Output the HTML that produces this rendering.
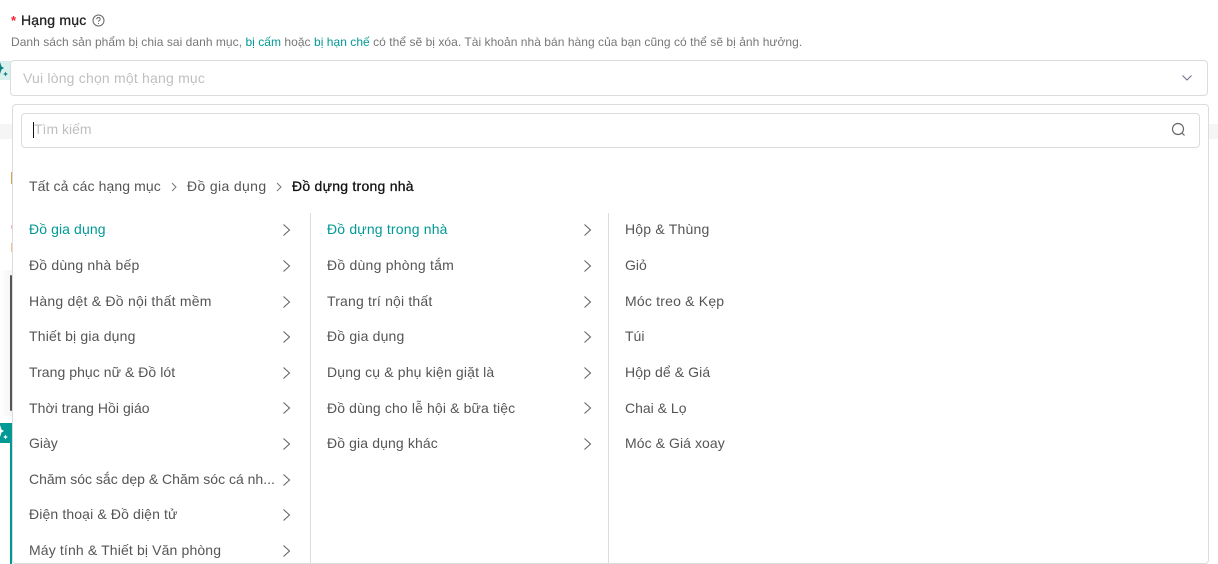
<!DOCTYPE html>
<html lang="vi"><head><meta charset="utf-8"><style>
html,body{margin:0;padding:0;background:#fff}
body{width:1218px;height:564px;position:relative;overflow:hidden;font-family:"Liberation Sans","Noto Sans CJK JP",sans-serif;font-size:14px;color:#555}
.t{position:absolute;white-space:nowrap;line-height:20px}
.b{position:absolute;box-sizing:border-box;background:#fff;border:1px solid #dcdcdc;border-radius:4px}
.r{position:absolute}
svg{position:absolute;fill:none}
.g{color:#009995}
</style></head><body>
<div class="r" style="left:0;top:124px;width:1218px;height:15px;background:#f5f5f5"></div>
<div class="r" style="left:0;top:61px;width:12px;height:19px;background:#d9f0ee"></div>
<div class="r" style="left:0;top:270px;width:12px;height:146px;background:linear-gradient(90deg,#fff 0,#f4f4f4 100%)"></div>
<div class="r" style="left:10px;top:275px;width:2px;height:136px;background:#555;border-radius:2px"></div>
<div class="r" style="left:11px;top:172px;width:1px;height:12px;background:#d9a25c"></div>
<div class="r" style="left:11px;top:225px;width:1px;height:4px;background:#f3b9bd"></div>
<div class="r" style="left:11px;top:243px;width:1px;height:9px;background:#ecc48f"></div>
<div class="r" style="left:0;top:423px;width:12px;height:20px;background:#009995"></div>
<div class="r" style="left:10px;top:443px;width:2px;height:121px;background:#009995"></div>
<svg style="left:0;top:60px" width="10" height="20" viewBox="0 0 10 20"><path d="M0 2L1.500 6.500 4 8 1.500 9.500 0 14Z" fill="#0a7f80"/><path d="M5.500 11.500L6.200 13.300 8 14 6.200 14.700 5.500 16.500 4.800 14.700 3 14 4.800 13.300Z" fill="#0a7f80"/></svg>
<svg style="left:0;top:423px" width="10" height="20" viewBox="0 0 10 20"><path d="M0 2L1.500 6.500 4 8 1.500 9.500 0 14Z" fill="#fff"/><path d="M5.500 11.500L6.200 13.300 8 14 6.200 14.700 5.500 16.500 4.800 14.700 3 14 4.800 13.300Z" fill="#fff"/></svg>

<div class="t" style="left:11px;top:11px;color:#f5222d;font-size:13px;font-weight:700">*</div>
<div class="t" style="left:21px;top:10px;color:#222;letter-spacing:.2px;-webkit-text-stroke:.3px #222">Hạng mục</div>
<svg style="left:92px;top:14px" width="13" height="13" viewBox="0 0 13 13"><circle cx="6.500" cy="6.500" r="5.500" stroke="#666"/><path d="M4.800 5.200C4.800 3 8.200 3 8.200 5.200 8.200 6.500 6.500 6.300 6.500 7.700" stroke="#666"/><path d="M6.500 9v1" stroke="#666"/></svg>
<div class="t" style="left:11px;top:32px;font-size:12px;color:#777;letter-spacing:.04px">Danh sách sản phẩm bị chia sai danh mục, <span class="g">bị cấm</span> hoặc <span class="g">bị hạn chế</span> có thể sẽ bị xóa. Tài khoản nhà bán hàng của bạn cũng có thể sẽ bị ảnh hưởng.</div>

<div class="b" style="left:10px;top:60px;width:1198px;height:36px"></div>
<div class="t" style="left:23px;top:68px;color:#bfbfbf;letter-spacing:.2px">Vui lòng chọn một hạng mục</div>
<svg style="left:1181px;top:74px" width="12" height="8" viewBox="0 0 12 8"><path d="M1.500 1.500L6 6 10.500 1.500" stroke="#6f7190" stroke-width="1.100"/></svg>

<div class="b" style="left:12px;top:104px;width:1197px;height:460px"></div>
<div class="b" style="left:21px;top:113px;width:1179px;height:35px"></div>
<div class="r" style="left:33px;top:122px;width:1px;height:16px;background:#111"></div>
<div class="t" style="left:34px;top:119px;color:#bfbfbf">Tìm kiếm</div>
<svg style="left:1171px;top:122px" width="15" height="15" viewBox="0 0 15 15"><circle cx="7" cy="7" r="5.500" stroke="#666" stroke-width="1.200"/><path d="M11 11L13.500 13.500" stroke="#666" stroke-width="1.200"/></svg>

<div class="t" style="left:29px;top:176px;letter-spacing:.1px">Tất cả các hạng mục</div>
<svg style="left:170px;top:182px" width="8" height="10" viewBox="0 0 8 10"><path d="M2 1L6 5 2 9" stroke="#777"/></svg>
<div class="t" style="left:187px;top:176px;letter-spacing:.36px">Đồ gia dụng</div>
<svg style="left:275px;top:182px" width="8" height="10" viewBox="0 0 8 10"><path d="M2 1L6 5 2 9" stroke="#777"/></svg>
<div class="t" style="left:292px;top:176px;color:#111;letter-spacing:.25px;-webkit-text-stroke:.3px #111">Đồ dựng trong nhà</div>

<div class="r" style="left:310px;top:213px;width:1px;height:350px;background:#dcdcdc"></div>
<div class="r" style="left:608px;top:213px;width:1px;height:350px;background:#dcdcdc"></div>

<div class="t g" style="left:29px;top:219px;letter-spacing:.1px">Đồ gia dụng</div>
<div class="t" style="left:29px;top:255px;letter-spacing:.2px">Đồ dùng nhà bếp</div>
<div class="t" style="left:29px;top:291px;letter-spacing:.23px">Hàng dệt &amp; Đồ nội thất mềm</div>
<div class="t" style="left:29px;top:326px;letter-spacing:.18px">Thiết bị gia dụng</div>
<div class="t" style="left:29px;top:362px;letter-spacing:.05px">Trang phục nữ &amp; Đồ lót</div>
<div class="t" style="left:29px;top:398px;letter-spacing:.05px">Thời trang Hồi giáo</div>
<div class="t" style="left:29px;top:433px">Giày</div>
<div class="t" style="left:29px;top:469px">Chăm sóc sắc dẹp &amp; Chăm sóc cá nh...</div>
<div class="t" style="left:29px;top:504px;letter-spacing:.13px">Điện thoại &amp; Đồ diện tử</div>
<div class="t" style="left:29px;top:540px;letter-spacing:.14px">Máy tính &amp; Thiết bị Văn phòng</div>

<svg style="left:282px;top:224px" width="10" height="336" viewBox="0 0 10 336"><path stroke="#666" stroke-width="1.100" d="M1.500 0.500L7.500 6 1.500 11.500M1.500 36.500L7.500 42 1.500 47.500M1.500 72.500L7.500 78 1.500 83.500M1.500 107.500L7.500 113 1.500 118.500M1.500 143.500L7.500 149 1.500 154.500M1.500 178.500L7.500 184 1.500 189.500M1.500 214.500L7.500 220 1.500 225.500M1.500 250.500L7.500 256 1.500 261.500M1.500 285.500L7.500 291 1.500 296.500M1.500 321.500L7.500 327 1.500 332.500"/></svg>

<div class="t g" style="left:327px;top:219px;letter-spacing:.18px">Đồ dựng trong nhà</div>
<div class="t" style="left:327px;top:255px;letter-spacing:.24px">Đồ dùng phòng tắm</div>
<div class="t" style="left:327px;top:291px;letter-spacing:.18px">Trang trí nội thất</div>
<div class="t" style="left:327px;top:326px;letter-spacing:.18px">Đồ gia dụng</div>
<div class="t" style="left:327px;top:362px;letter-spacing:.15px">Dụng cụ &amp; phụ kiện giặt là</div>
<div class="t" style="left:327px;top:398px;letter-spacing:.13px">Đồ dùng cho lễ hội &amp; bữa tiệc</div>
<div class="t" style="left:327px;top:433px;letter-spacing:.12px">Đồ gia dụng khác</div>

<svg style="left:583px;top:224px" width="10" height="230" viewBox="0 0 10 230"><path stroke="#666" stroke-width="1.100" d="M1.500 0.500L7.500 6 1.500 11.500M1.500 36.500L7.500 42 1.500 47.500M1.500 72.500L7.500 78 1.500 83.500M1.500 107.500L7.500 113 1.500 118.500M1.500 143.500L7.500 149 1.500 154.500M1.500 178.500L7.500 184 1.500 189.500M1.500 214.500L7.500 220 1.500 225.500"/></svg>

<div class="t" style="left:625px;top:219px;letter-spacing:.2px">Hộp &amp; Thùng</div>
<div class="t" style="left:625px;top:255px">Giỏ</div>
<div class="t" style="left:625px;top:291px;letter-spacing:.2px">Móc treo &amp; Kẹp</div>
<div class="t" style="left:625px;top:326px">Túi</div>
<div class="t" style="left:625px;top:362px;letter-spacing:.1px">Hộp dể &amp; Giá</div>
<div class="t" style="left:625px;top:398px">Chai &amp; Lọ</div>
<div class="t" style="left:625px;top:433px;letter-spacing:.07px">Móc &amp; Giá xoay</div>
</body></html>
